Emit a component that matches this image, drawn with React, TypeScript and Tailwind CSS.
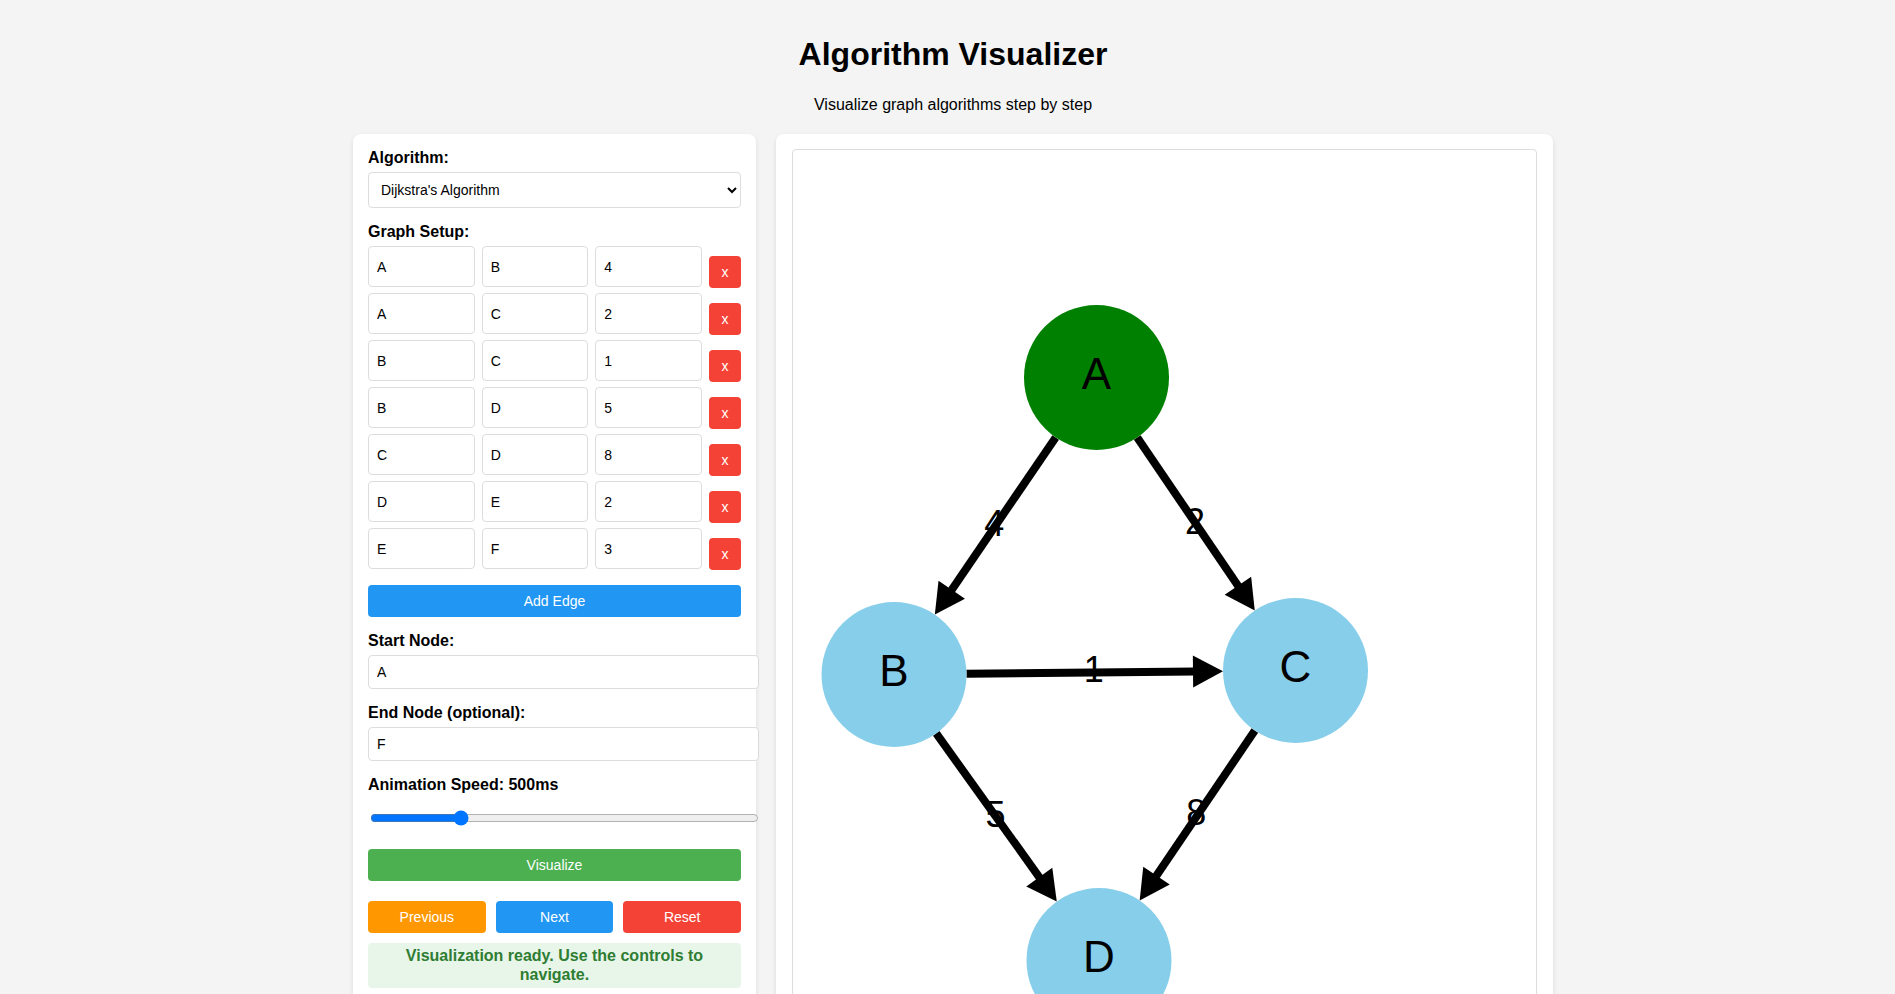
import { useState } from "react";

type Edge = { from: string; to: string; weight: string };

const initialEdges: Edge[] = [
  { from: "A", to: "B", weight: "4" },
  { from: "A", to: "C", weight: "2" },
  { from: "B", to: "C", weight: "1" },
  { from: "B", to: "D", weight: "5" },
  { from: "C", to: "D", weight: "8" },
  { from: "D", to: "E", weight: "2" },
  { from: "E", to: "F", weight: "3" },
];

// node positions inside the canvas (px)
const nodes: Record<string, { x: number; y: number; color: string }> = {
  A: { x: 303.5, y: 227.5, color: "#008000" },
  B: { x: 101, y: 524.5, color: "#87ceeb" },
  C: { x: 502.5, y: 520.5, color: "#87ceeb" },
  D: { x: 306, y: 810.5, color: "#87ceeb" },
  E: { x: 110, y: 1110, color: "#87ceeb" },
  F: { x: 500, y: 1110, color: "#87ceeb" },
};

const R = 72.5;
const HEAD = 30;
const HALF = 16;

const GraphEdge = ({ edge }: { edge: Edge }) => {
  const a = nodes[edge.from];
  const b = nodes[edge.to];
  if (!a || !b) return null;
  const dx = b.x - a.x;
  const dy = b.y - a.y;
  const len = Math.hypot(dx, dy);
  const ux = dx / len;
  const uy = dy / len;
  const sx = a.x + ux * R;
  const sy = a.y + uy * R;
  const tx = b.x - ux * R;
  const ty = b.y - uy * R;
  const bx = tx - ux * HEAD;
  const by = ty - uy * HEAD;
  const nx = -uy;
  const ny = ux;
  const mx = (a.x + b.x) / 2;
  const my = (a.y + b.y) / 2;
  return (
    <g>
      <text x={mx - 1} y={my + 9.6} fontSize={36} textAnchor="middle" fill="#000">
        {edge.weight}
      </text>
      <line x1={sx} y1={sy} x2={bx + ux * 2} y2={by + uy * 2} stroke="#000" strokeWidth={8} />
      <polygon
        points={`${tx},${ty} ${bx + nx * HALF},${by + ny * HALF} ${bx - nx * HALF},${by - ny * HALF}`}
        fill="#000"
      />
    </g>
  );
};

const GraphCanvas = ({ edges }: { edges: Edge[] }) => (
  <div className="border border-[#ddd] rounded-[4px] overflow-hidden">
    <svg width="100%" height="1200" className="block" fontFamily="'Liberation Sans', Arial, sans-serif">
      {edges.map((e, i) => (
        <GraphEdge key={i} edge={e} />
      ))}
      {Object.entries(nodes).map(([id, n]) => (
        <g key={id}>
          <circle cx={n.x} cy={n.y} r={R} fill={n.color} />
          <text x={n.x} y={n.y + 11.7} fontSize={44} textAnchor="middle" fill="#000">
            {id}
          </text>
        </g>
      ))}
    </svg>
  </div>
);

const labelCls = "block text-[16px] leading-[18px] font-bold text-black";
const inputCls =
  "bg-white border border-[#ddd] rounded-[4px] px-2 text-[14px] text-black outline-none";
const btnCls = "h-[32px] rounded-[4px] text-white text-[14px] leading-[16px]";

export default function App() {
  const [edges, setEdges] = useState<Edge[]>(initialEdges);
  const [algorithm, setAlgorithm] = useState("dijkstra");
  const [startNode, setStartNode] = useState("A");
  const [endNode, setEndNode] = useState("F");
  const [speed, setSpeed] = useState(500);

  const updateEdge = (i: number, key: keyof Edge, value: string) =>
    setEdges(prev => prev.map((e, idx) => (idx === i ? { ...e, [key]: value } : e)));

  return (
    <div className="min-h-screen bg-[#f4f4f4] font-['Liberation_Sans',Arial,sans-serif] text-black pl-[11px] pb-10">
      <div className="max-w-[1200px] mx-auto">
        <h1 className="pt-[36px] text-[32px] leading-[37px] font-bold text-center">Algorithm Visualizer</h1>
        <p className="mt-[23px] text-[16px] leading-[18px] text-center">Visualize graph algorithms step by step</p>

        <div className="mt-[20px] flex items-start gap-[20px]">
          {/* controls */}
          <div className="w-[403px] shrink-0 bg-white rounded-[8px] shadow-[0_2px_5px_rgba(0,0,0,0.1)] p-[15px]">
            <label className={labelCls}>Algorithm:</label>
            <select
              value={algorithm}
              onChange={e => setAlgorithm(e.target.value)}
              className="mt-[5px] w-full h-[36px] bg-white border border-[#ddd] rounded-[4px] px-2 text-[14px]"
            >
              <option value="dijkstra">Dijkstra's Algorithm</option>
              <option value="bfs">Breadth-First Search</option>
              <option value="dfs">Depth-First Search</option>
            </select>

            <label className={`${labelCls} mt-[15px]`}>Graph Setup:</label>
            <div className="mt-[5px] flex flex-col gap-[5px]">
              {edges.map((edge, i) => (
                <div key={i} className="flex items-start gap-[7px]">
                  <input
                    value={edge.from}
                    onChange={e => updateEdge(i, "from", e.target.value)}
                    className={`${inputCls} flex-1 min-w-0 h-[41px]`}
                  />
                  <input
                    value={edge.to}
                    onChange={e => updateEdge(i, "to", e.target.value)}
                    className={`${inputCls} flex-1 min-w-0 h-[41px]`}
                  />
                  <input
                    value={edge.weight}
                    onChange={e => updateEdge(i, "weight", e.target.value)}
                    className={`${inputCls} flex-1 min-w-0 h-[41px]`}
                  />
                  <button
                    onClick={() => setEdges(prev => prev.filter((_, idx) => idx !== i))}
                    className="mt-[10px] w-[32px] h-[32px] shrink-0 rounded-[4px] bg-[#f44336] text-white text-[14px] leading-none"
                  >
                    x
                  </button>
                </div>
              ))}
            </div>

            <button
              onClick={() => setEdges(prev => [...prev, { from: "", to: "", weight: "" }])}
              className={`${btnCls} mt-[15px] w-full bg-[#2196f3]`}
            >
              Add Edge
            </button>

            <label className={`${labelCls} mt-[15px]`}>Start Node:</label>
            <input
              value={startNode}
              onChange={e => setStartNode(e.target.value)}
              className={`${inputCls} mt-[5px] block w-[391px] h-[34px]`}
            />

            <label className={`${labelCls} mt-[15px]`}>End Node (optional):</label>
            <input
              value={endNode}
              onChange={e => setEndNode(e.target.value)}
              className={`${inputCls} mt-[5px] block w-[391px] h-[34px]`}
            />

            <label className={`${labelCls} mt-[15px]`}>Animation Speed: {speed}ms</label>
            <input
              type="range"
              min={100}
              max={1900}
              step={50}
              value={speed}
              onChange={e => setSpeed(Number(e.target.value))}
              className="mt-[16px] ml-[2px] block w-[389px] h-[16px]"
            />

            <button className={`${btnCls} mt-[23px] w-full bg-[#4caf50]`}>Visualize</button>

            <div className="mt-[20px] flex gap-[10px]">
              <button className={`${btnCls} flex-1 bg-[#ff9800]`}>Previous</button>
              <button className={`${btnCls} flex-1 bg-[#2196f3]`}>Next</button>
              <button className={`${btnCls} flex-1 bg-[#f44336]`}>Reset</button>
            </div>

            <div className="mt-[10px] rounded-[4px] bg-[#e8f5e9] text-[#2e7d32] font-bold text-[16px] leading-[18.5px] text-center px-[10px] py-[4px]">
              Visualization ready. Use the controls to navigate.
            </div>
          </div>

          {/* canvas */}
          <div className="flex-1 min-w-0 bg-white rounded-[8px] shadow-[0_2px_5px_rgba(0,0,0,0.1)] px-[16px] py-[15px]">
            <GraphCanvas edges={edges} />
          </div>
        </div>
      </div>
    </div>
  );
}
